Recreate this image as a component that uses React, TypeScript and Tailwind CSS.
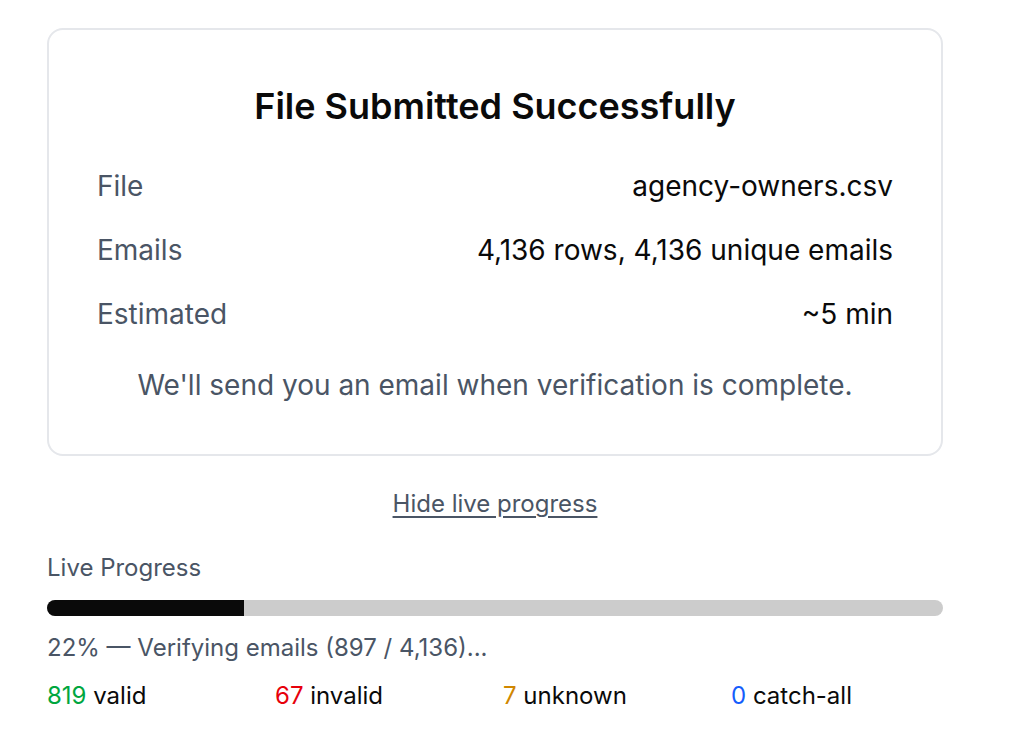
import React from "react";

export default function App() {
  const rows = [
    ["File", "agency-owners.csv"],
    ["Emails", "4,136 rows, 4,136 unique emails"],
    ["Estimated", "~5 min"],
  ];
  const pct = 22;
  return (
    <div className="min-h-[752px] bg-white font-['Inter',sans-serif]">
      <div className="ml-[47px] w-[896px] pt-[28px]">
        <div className="rounded-[16px] border-2 border-[#e5e7eb] px-[48px] pt-[54px] pb-[49px]">
          <h1 className="text-center text-[36px] font-semibold leading-[44px] text-[#0a0a0a]">
            File Submitted Successfully
          </h1>
          <div className="mt-[38px] flex flex-col gap-[24px]">
            {rows.map(([k, v]) => (
              <div key={k} className="flex justify-between text-[28px] leading-[40px]">
                <span className="text-[#4a5565]">{k}</span>
                <span className="text-[#0a0a0a]">{v}</span>
              </div>
            ))}
          </div>
          <p className="mt-[31px] text-center text-[28px] leading-[40px] text-[#4a5565]">
            We'll send you an email when verification is complete.
          </p>
        </div>
        <div className="mt-[31px] flex justify-center">
          <button className="text-[24px] leading-[34px] text-[#4a5565] underline underline-offset-[4px]">
            Hide live progress
          </button>
        </div>
        <div className="mt-[32px] text-[24px] leading-[30px] text-[#4a5565]">Live Progress</div>
        <div className="mt-[17px] h-[16px] w-full overflow-hidden rounded-full bg-[#cccccc]">
          <div className="h-full bg-[#0a0a0a]" style={{ width: `${pct}%` }} />
        </div>
        <div className="mt-[16px] text-[24px] leading-[32px] text-[#4a5565]">
          22% — Verifying emails (897 / 4,136)...
        </div>
        <div className="mt-[16px] grid grid-cols-4 gap-4 text-[24px] leading-[32px] text-[#0a0a0a]">
          <div><span className="text-[#00a63e]">819</span> valid</div>
          <div><span className="text-[#e7000b]">67</span> invalid</div>
          <div><span className="text-[#d08700]">7</span> unknown</div>
          <div><span className="text-[#155dfc]">0</span> catch-all</div>
        </div>
      </div>
    </div>
  );
}
